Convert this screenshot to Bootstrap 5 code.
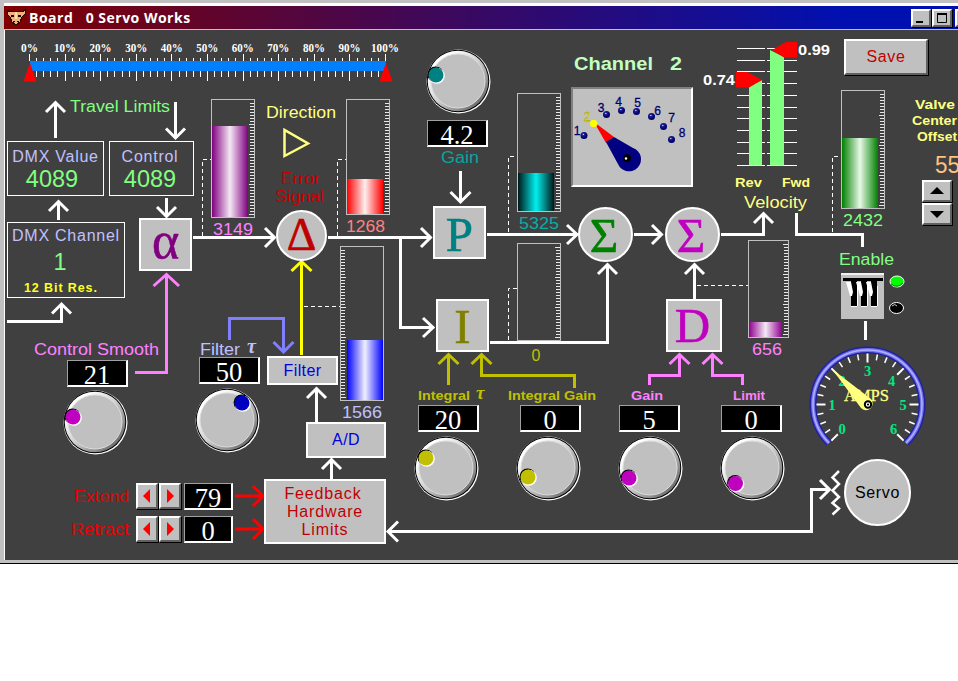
<!DOCTYPE html>
<html lang="en">
<head>
<meta charset="utf-8">
<meta name="viewport" content="width=device-width, initial-scale=1">
<title>Board 0 Servo Works</title>
<link href="https://cdn.jsdelivr.net/npm/bootstrap@5.3.0/dist/css/bootstrap.min.css" rel="stylesheet">
<style>
body{background:#fff;font-family:"Liberation Sans",Arial,sans-serif;overflow:hidden}
.win{width:958px;height:564px;overflow:hidden;background:#404040;border-bottom:1px solid #000}
.win-frame{height:563px;border-left:4px solid #c0c0c0;border-top:3px solid #c0c0c0;border-bottom:3px solid #c0c0c0;padding-top:3px;background:linear-gradient(#fff,#fff) top/100% 3px no-repeat;box-shadow:inset 1px 0 0 #fff}
.titlebar{height:24px;background:linear-gradient(90deg,#800000,#0010b0 88%);border-bottom:1px solid #c0c0c0;color:#fff;padding-left:3px;overflow:hidden}
.titlebar .caption{font:bold 14px/22px "Open Sans",sans-serif;white-space:pre;margin-left:3px;letter-spacing:.5px}
.raised{background:#c0c0c0;border:2px solid;border-color:#fff #606060 #606060 #fff;box-shadow:1px 1px 0 #000;border-radius:0;padding:0;line-height:1}
.winbtn{width:20px;height:18px;flex:none;margin-right:1px}
#closeBtn{margin-left:2px;margin-right:-17px}
.layer{left:0;top:0;width:958px;height:563px;pointer-events:none}
.node{position:absolute;display:flex;align-items:center;justify-content:center;text-align:center;line-height:1}
.frame{border:1px solid #fff;flex-direction:column;justify-content:flex-start}
.frame .name{font-size:16px;color:#c0c0ff;letter-spacing:.75px;line-height:18px;white-space:nowrap}
.frame .val{font-size:23.5px;color:#80ff80;line-height:26px}
.block{background:#c0c0c0;border:2px solid #fff;color:#0000e0;font-size:16px;letter-spacing:.4px}
.sym{width:53px;height:53px;font-family:"Liberation Serif",serif;font-size:49px;letter-spacing:0;-webkit-text-stroke:.6px currentColor}
.sum{width:55px;height:55px;font-size:49px;border-radius:50%}
.readout{background:#000;color:#fff;width:61px;height:27px;border:1px solid;border-width:1px 2px 2px 1px;border-color:#a0a0a0 #fff #fff #a0a0a0;font-family:"Liberation Serif",serif;font-size:26.500px;padding-top:4px}
.readout.narrow{width:49px}
#dmxValue{left:7px;top:141px;width:97px;height:55px;padding-top:6px}
#dmxValue .val{margin-right:7px}
#control{left:109px;top:141px;width:85px;height:55px;padding-top:6px}
#control .name{margin-right:3px}
#control .val{margin-right:3px}
#dmxChannel{left:7px;top:222px;width:118px;height:76px;padding-top:4px}
#dmxChannel .val{line-height:34px;margin-right:12px}
#dmxChannel .res{font:bold 12.5px/18px "Liberation Sans",sans-serif;color:#ffff20;letter-spacing:.9px;align-self:flex-start;margin-left:16px}
#alpha{left:139px;top:218px;color:#800080;font-size:52px;padding-bottom:7px}
#prop{left:433px;top:206px;color:#008080;padding-top:3px}
#integ{left:436px;top:299px;color:#808000;padding-top:2px}
#deriv{left:666px;top:299px;width:56px;color:#c000c0;padding-right:3px}
#delta{left:276px;top:210px;width:51px;height:51px;font-size:46px;color:#c00000;padding-bottom:2px}
#sumA{left:578px;top:207px;color:#008000;padding:2px 3px 0 0}
#sumB{left:665px;top:207px;color:#c000c0;padding:2px 3px 0 0}
#filter{left:267px;top:356px;width:71px;height:29px}
#ad{left:306px;top:422px;width:80px;height:36px}
#limits{left:264px;top:479px;width:122px;height:65px;color:#c00000;line-height:18px;letter-spacing:.85px}
#limits .first{margin-right:4px}
#servo{left:844px;top:459px;width:67px;height:67px;border-radius:50%;color:#000;letter-spacing:.6px}
#save{left:844px;top:39px;width:84px;height:36px;color:#c00000;font-size:16px;letter-spacing:.6px}
#rGain{left:427px;top:120px}#rSmooth{left:67px;top:360px}#rFilter{left:199px;top:357px}
#rIt{left:418px;top:405px}#rIg{left:520px;top:405px}#rDg{left:619px;top:405px}#rDl{left:721px;top:405px}
#rExt{left:184px;top:483px}#rRet{left:184px;top:516px}
#spinV{left:922px;top:180px;width:30px;flex-direction:column}
#spinV .raised{width:30px;height:22px;margin-bottom:1px}
#spinE{left:136px;top:483px}#spinR{left:136px;top:516px}
.spinH .raised{width:22px;height:26px;margin-right:1px}
#dial{left:571px;top:87px;width:122px;height:100px;background:#c0c0c0;border:2px solid;border-color:#808080 #fff #fff #808080}
svg text{white-space:pre}
.wire{fill:none;stroke-width:3}
.dash{fill:none;stroke:#fff;stroke-width:1;stroke-dasharray:4 3}
</style>
</head>
<body>
<main class="win position-relative">
  <div class="win-frame">
    <header class="titlebar d-flex align-items-center">
      <svg width="19" height="17" viewBox="0 0 19 17" shape-rendering="crispEdges"><path d="M0 1l3 2 3-1h6l3 1 3-2v4l-3 3-2 5-4 3-4-3-2-5-3-3z" fill="#f0b080" stroke="#201000"/><path d="M4 6h3v2H4zM11 6h3v2h-3zM6 12h2v1H6zM10 12h2v1h-2zM8 15h3v1H8z" fill="#201000"/><path d="M8 3h2v7H8z" fill="#ffe0a0"/></svg>
      <span class="caption flex-grow-1">Board   0 Servo Works</span>
      <button class="raised winbtn" aria-label="Minimize"><svg class="d-block" width="16" height="14"><path d="M3 10h7v2H3z"/></svg></button>
      <button class="raised winbtn" aria-label="Maximize"><svg class="d-block" width="16" height="14"><path d="M3.500 2.500h9v9h-9z" fill="none" stroke="#000"/><path d="M3 2h10v2H3z"/></svg></button>
      <button class="raised winbtn" id="closeBtn" aria-label="Close"></button>
    </header>
  </div>

  <svg class="layer position-absolute" id="wires" viewBox="0 0 958 563"></svg>

  <section class="node frame" id="dmxValue"><div class="name">DMX Value</div><div class="val">4089</div></section>
  <section class="node frame" id="control"><div class="name">Control</div><div class="val">4089</div></section>
  <section class="node frame" id="dmxChannel"><div class="name">DMX Channel</div><div class="val">1</div><div class="res">12 Bit Res.</div></section>

  <div class="node block sym" id="alpha">α</div>
  <div class="node block sym" id="prop">P</div>
  <div class="node block sym" id="integ">I</div>
  <div class="node block sym" id="deriv">D</div>
  <div class="node block sym sum" id="delta">Δ</div>
  <div class="node block sym sum" id="sumA">Σ</div>
  <div class="node block sym sum" id="sumB">Σ</div>
  <div class="node block" id="filter">Filter</div>
  <div class="node block" id="ad">A/D</div>
  <div class="node block flex-column" id="limits"><span class="first">Feedback</span><span>Hardware</span><span>Limits</span></div>
  <div class="node block" id="servo">Servo</div>
  <button class="node raised" id="save">Save</button>

  <output class="node readout" id="rGain">4.2</output>
  <output class="node readout" id="rSmooth">21</output>
  <output class="node readout" id="rFilter">50</output>
  <output class="node readout" id="rIt">20</output>
  <output class="node readout" id="rIg">0</output>
  <output class="node readout" id="rDg">5</output>
  <output class="node readout" id="rDl">0</output>
  <output class="node readout narrow" id="rExt">79</output>
  <output class="node readout narrow" id="rRet">0</output>

  <div class="node" id="spinV">
    <button class="raised" aria-label="Up"><svg class="d-block mx-auto" width="14" height="8"><path d="M7 0l7 7H0z"/></svg></button>
    <button class="raised" aria-label="Down"><svg class="d-block mx-auto" width="14" height="8"><path d="M7 8l7-7H0z"/></svg></button>
  </div>
  <div class="node spinH" id="spinE">
    <button class="raised" aria-label="Less"><svg class="d-block mx-auto" width="8" height="14"><path d="M0 7l7-7v14z" fill="red"/></svg></button>
    <button class="raised" aria-label="More"><svg class="d-block mx-auto" width="8" height="14"><path d="M8 7L1 0v14z" fill="red"/></svg></button>
  </div>
  <div class="node spinH" id="spinR">
    <button class="raised" aria-label="Less"><svg class="d-block mx-auto" width="8" height="14"><path d="M0 7l7-7v14z" fill="red"/></svg></button>
    <button class="raised" aria-label="More"><svg class="d-block mx-auto" width="8" height="14"><path d="M8 7L1 0v14z" fill="red"/></svg></button>
  </div>
  <div class="node" id="dial"></div>

  <svg class="layer position-absolute" id="parts" viewBox="0 0 958 563"></svg>
</main>
<script src="https://cdn.jsdelivr.net/npm/bootstrap@5.3.0/dist/js/bootstrap.bundle.min.js"></script>
<script>
const W='#fff', PINK='#ff80ff', OLIVE='#c0c000';
let out='';

// Wires: colour, path including arrow heads
const wires=[
 [W,'M55.500 138V104M46 112L55.500 102.500 65 112'],
 [W,'M175.500 102V137M166 128.500L175.500 138 185 128.500'],
 [W,'M166.500 198V216M157 207L166.500 216.500 176 207'],
 [W,'M58.500 220V203M49 211L58.500 201.500 68 211'],
 [W,'M7 321.500H61.500V305M52 313.500L61.500 304 71 313.500'],
 [W,'M193 237.500H274M265 228L274.500 237.500 265 247'],
 [W,'M328 237.500H430M421 228L430.500 237.500 421 247'],
 [W,'M400.500 237V327.500H433M423 318L433 327.500 423 337'],
 [W,'M487 234.500H577M567 225L577 234.500 567 244'],
 [W,'M490 342.500H607.500V265M598 274L607.500 264.500 617 274'],
 [W,'M634 234.500H661M652 225L661.500 234.500 652 244'],
 [W,'M721 234.500H763.500V215M754 223L763.500 213.500 773 223'],
 [W,'M796.500 213V234.500H862.500V247'],
 [W,'M694.500 299V265M685 274L694.500 264.500 704 274'],
 [W,'M865.500 321V340'],
 [W,'M316.500 422V390M307 398L316.500 388.500 326 398'],
 [W,'M331.500 479V461M322 469L331.500 459.500 341 469'],
 [W,'M388 531.500H811.500V489.500H829M398 521.500L388 531.500 398 541.500M820 480L829.500 489.500 820 499'],
 ['#ff0','M301.500 355V263M291.500 271L301.500 261.500 311.500 271'],
 [W,'M460.500 171V201M450.500 192L460.500 202 470.500 192'],
 ['#8080ff','M229.500 340V318.500H283.500V351M273.500 342L283.500 352 293.500 342'],
 [PINK,'M135 372.500H166.500V275M153.500 286L166.500 274.500 179 286'],
 [OLIVE,'M448.500 385V355M438.500 364L448.500 354.500 458.500 364'],
 [OLIVE,'M574.500 388V375.500H481.500V355M471.500 364L481.500 354.500 491.500 364'],
 [PINK,'M649.500 385V375.500H679.500V355M669.500 364L679.500 354.500 689.500 364'],
 [PINK,'M742.500 385V375.500H712.500V355M702.500 364L712.500 354.500 722.500 364'],
 ['#f00','M235 496H262M253 486L263 496 253 506M235 529H262M253 519L263 529 253 539']
];
for(const [c,d] of wires) out+=`<path class="wire" stroke="${c}" d="${d}"/>`;
out+='<path d="M839 471L832.500 477.500 839 484 832.500 490.500 839 497 832.500 503 839 508.500 832.500 514.500" fill="none" stroke="#fff" stroke-width="2.500"/>';
out+='<path class="dash" d="M202.500 236V159.500H211M337.500 236V159.500H346M508.500 232V156.500H517M508.500 340V288.500H517M697 285.500H748M304 306.500H340M832.500 232V156.500H841"/>';
// Direction indicator
out+='<path d="M284.500 130V156L308 143.500z" fill="none" stroke="#ffff80" stroke-width="2.500"/>';
document.getElementById('wires').innerHTML=out;

out=`<defs>
 <linearGradient id="knobRim" x1="0" y1="0" x2="1" y2="1"><stop offset=".2" stop-color="#fff"/><stop offset=".5" stop-color="#d0d0d0"/><stop offset=".85" stop-color="#707070"/></linearGradient>
 <radialGradient id="bead" cx=".4" cy=".35"><stop offset="0" stop-color="#fff"/><stop offset=".3" stop-color="#202090"/><stop offset="1" stop-color="#000070"/></radialGradient></defs>`;

function label(s,x,y,w,size,color,extra=''){
  out+=`<text x="${x}" y="${y}" font-size="${size}" fill="${color}" ${w?`textLength="${w}" lengthAdjust="spacingAndGlyphs"`:''} ${extra}>${s}</text>`;
}
const SERIF='font-family="Liberation Serif,serif"', BOLD='font-weight="bold"';

// Travel ruler
out+='<path fill="#0080ff" d="M30 61h356v10H30z"/>';
for(let i=0;i<=50;i++){
  const x=Math.round(29+i*7.12)+.5, major=i%5===0;
  out+=`<path stroke="#fff" d="M${x} ${major?54:58}V61M${x} 71V${major?81:77}"/>`;
}
for(let i=0;i<=10;i++) label(i*10+'%',29.500+i*35.550,52,i===10?28:i?22:17,12,W,SERIF+' '+BOLD+' text-anchor="middle"');
out+='<path fill="red" d="M30 63L36.500 81.500H23.500zM386 63L392.500 81.500H379.500z"/>';

// Level meters: x, y, w, h, fill top, edge colour, centre colour, scale on left
const meters=[
 [211,99,43,118,126,'#800080','#f4e8f4'],
 [346,99,43,115,179,'#ff0000','#fff0f0'],
 [340,246,43,154,340,'#0000ff','#f0f0ff',true],
 [517,93,43,118,173,'#001818','#00f0f0'],
 [517,243,43,97,0],
 [748,240,40,97,322,'#900090','#f4e8f4'],
 [841,90,43,118,138,'#008000','#e8f8e8']
];
meters.forEach(([x,y,w,h,top,a,b,left],n)=>{
  if(top){
    out+=`<linearGradient id="m${n}"><stop offset="0" stop-color="${a}"/><stop offset=".5" stop-color="${b}"/><stop offset="1" stop-color="${a}"/></linearGradient>`;
    out+=`<rect x="${left?x+7:x+1}" y="${top}" width="${w-7}" height="${y+h-top}" fill="url(#m${n})"/>`;
  }
  out+=`<rect x="${x+.5}" y="${y+.5}" width="${w}" height="${h}" fill="none" stroke="#c0c0c0"/>`;
  let k=0;
  for(let t=y+h-2.500;t>y+2;t-=3,k++){
    const len=k%10===0?5:4, x0=left?x+1:x+w-len;
    out+=`<path stroke="#e8e8e8" d="M${x0} ${t}h${len}"/>`;
  }
});

// Velocity limits
for(let i=0;i<=10;i++){const y=Math.round(48+i*11.700)+.5; out+=`<path stroke="#fff" d="M737 ${y}h28M767 ${y}h30"/>`;}
out+='<path fill="#80ff80" d="M749 87l13-7v85.500h-13zM770 50l14 7v108.500h-14z"/><path fill="red" d="M736 72h11l15 8-13 7.500h-13zM797 42h-11l-14 8 12 7.500h13z"/>';
label('0.74',703,85,32,14.500,W,BOLD); label('0.99',798,54.500,32,14.500,W,BOLD);

// Knobs: centre, marker, colour
[[458,81,436,75,'#008080'],[95,422,73,417,'#c000c0'],[227,420,242,403,'#0000c0'],[446,468,426,458,OLIVE],[548,468,528,477,OLIVE],[650,468,629,478,'#c000c0'],[752,468,735.500,483.500,'#c000c0']]
.forEach(([x,y,a,b,c])=>{
  out+=`<circle cx="${x+.5}" cy="${y+.5}" r="32" fill="#fff"/><circle cx="${x}" cy="${y}" r="31.300" fill="#000"/><circle cx="${x}" cy="${y}" r="30.300" fill="url(#knobRim)"/><circle cx="${x}" cy="${y}" r="27" fill="#c0c0c0" stroke="#dcdcdc"/>
  <circle cx="${a-.4}" cy="${b-.6}" r="8" fill="#000"/><circle cx="${a+.8}" cy="${b+.8}" r="8" fill="#fff"/><circle cx="${a}" cy="${b}" r="7.500" fill="${c}"/>`;
});

// Channel selector
[[584,135.500,577,135],[593.500,123.500,587,121],[606.500,114.500,601,112],[621.500,110.500,618.500,106],[636.500,111.500,637.500,107],[651.500,116.500,657.500,115],[663.500,126.500,671.500,122],[671.500,139.500,682,137]]
.forEach(([x,y,a,b],i)=>{
  out+=`<circle cx="${x}" cy="${y}" r="3.500" fill="${i===1?'#ff0':'url(#bead)'}"/>`;
  label(i+1,a,b,0,12,i===1?'#ff0':'#000070','text-anchor="middle" stroke="'+(i===1?'#808000':'#000070')+'" stroke-width=".3"');
});
out+='<path d="M608 143L617 162A14 12 0 0 0 640 164Q643 154 633 148z" fill="#909090"/><path fill="#f00" d="M594 122L614 137 606 143z"/><path fill="#000080" d="M614 137L633 148A12 12 0 1 1 618 164L606 142z"/><circle cx="627" cy="158" r="4" fill="#000"/><circle cx="626" cy="158.500" r="1.200" fill="#fff"/><circle cx="594" cy="123.500" r="3.500" fill="#ff0"/>';

// Ammeter
const cx=867.500, cy=404.500, pt=(r,deg)=>{const t=deg*Math.PI/180;return (cx+r*Math.cos(t)).toFixed(1)+' '+(cy-r*Math.sin(t)).toFixed(1)};
const arc=r=>`M${pt(r,225)}A${r} ${r} 0 1 1 ${pt(r,-45)}`;
out+=`<g fill="none"><path d="${arc(54.500)}" stroke="#2020a0" stroke-width="7"/><path d="${arc(54.500)}" stroke="#7070e8" stroke-width="4"/><path d="${arc(54.500)}" stroke="#b0b0ff" stroke-width="1.500"/></g>`;
for(let i=0;i<=24;i++){const d=225-i*11.25; out+=`<path stroke="#fff" stroke-width="${i%4?1.500:2}" d="M${pt(i%4?45:42,d)}L${pt(51,d)}"/>`;}
[[842,434],[832,409.500],[842,386],[867.500,376],[891.500,386],[903,409.500],[893.500,434]].forEach(([x,y],i)=>label(i,x,y,0,14.500,'#00e880',SERIF+' '+BOLD+' text-anchor="middle"'));
label('AMPS',844,401,45,16,'#ffff80',SERIF+' stroke="#ffff80" stroke-width=".3"');
out+='<path fill="#ffff80" d="M832 369L871 399A6.500 6.500 0 1 1 861 408z"/><circle cx="868" cy="404.500" r="3.200" fill="#fff" stroke="#000" stroke-width="2"/><circle cx="868" cy="404.500" r="1.100"/>';

// Enable switch and lamps
out+='<path fill="#c0c0c0" d="M841 273h43v46h-43z"/><path fill="#f0f0f0" d="M841 273h43v2h-43z"/><path d="M843 278h40v3h-40z"/>';
for(const x of [851,861,871]) out+=`<path d="M${x} 281h6v25h-6z"/><path fill="#fff" d="M${x-5} 282l4 14h2l1-4-2-10zM${x} 306h6v1h-6z"/><path stroke="#fff" d="M${x+6.500} 286v20"/>`;
out+='<ellipse cx="897" cy="281.500" rx="7" ry="5.500" fill="#00ff00" stroke="#fff"/><path d="M891 284q6 5 12-1" fill="none" stroke="#008000"/><ellipse cx="896.500" cy="308" rx="7" ry="5.500" stroke="#fff"/><path d="M892 306q3-3 5 0" fill="none" stroke="#ccc"/>';

// Captions
const G='#80ff80', Y='#ffff80', L='#c0c0ff';
[['Travel Limits',70,112,100,16,G],['Direction',266,118,70,16,Y],['Error',281,184,39,16,'#c80000'],['Signal',275,202,49,16,'#c80000'],
['3149',213,235,40,16,PINK],['1268',346,232,39,16,'#ff8080'],['5325',519,229,40,16,'#00b0a8'],['0',531.500,361,0,16,OLIVE],['656',752,355,30,16,PINK],['1566',342,418,40,16,L],['2432',843,226,40,16,G],
['Gain',441,163,38,16,'#00a8a0'],['Velocity',744,208,63,16,Y],['Enable',839,265,55,16,G],['Control Smooth',34,355,125,16,PINK],['Filter',200,355,40,16,L],
['Extend',74,502,55,16,'#e80000'],['Retract',71,535,58,16,'#e80000'],['55',935,173,25,23,'#ffc080']].forEach(a=>label(...a));
[['Channel',574,70,79,19,'#c0ffc0'],['2',670,70,12,19,'#c0ffc0'],['Rev',735,187,27,13,Y],['Fwd',782,187,28,13,Y],['Valve',915,109,40,13,Y],['Center',912,125,45,13,Y],['Offset',917,141,40,13,Y],
['Integral',418,400,52,13,OLIVE],['Integral Gain',508,400,88,13,OLIVE],['Gain',631,400,32,13,PINK],['Limit',733,400,32,13,PINK]].forEach(a=>label(...a,BOLD));
label('τ',247,353,0,20,L,SERIF+' font-style="italic" '+BOLD);
label('τ',476,399,0,19,OLIVE,SERIF+' font-style="italic" '+BOLD);
document.getElementById('parts').innerHTML=out;
</script>
</body>
</html>
